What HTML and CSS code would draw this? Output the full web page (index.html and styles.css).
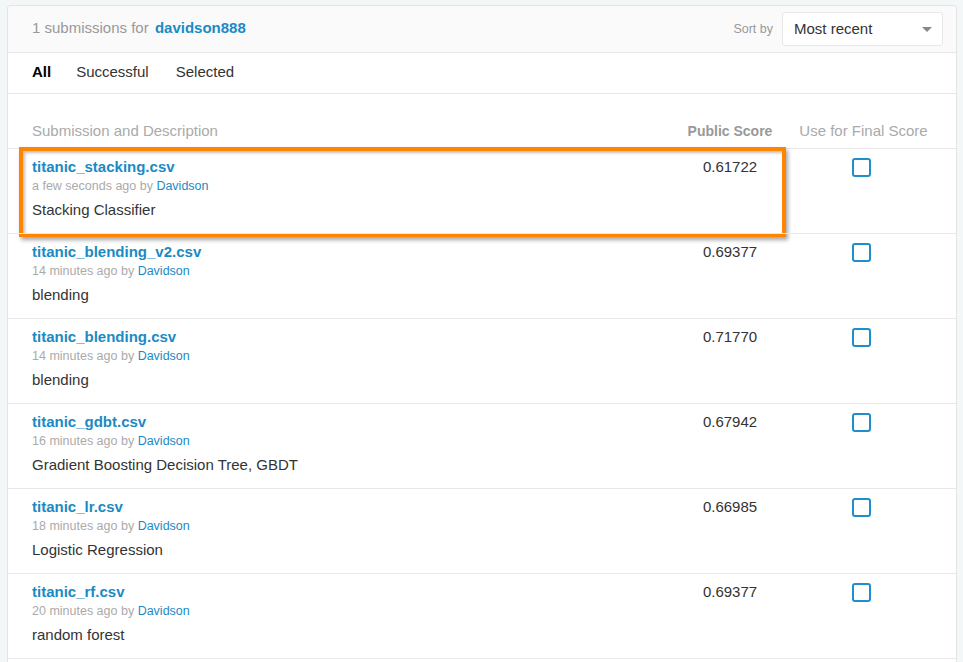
FILE: index.html
```html
<!DOCTYPE html>
<html lang="en">
<head>
<meta charset="utf-8">
<title>Submissions</title>
<link rel="stylesheet" href="styles.css">
</head>
<body>
<div class="card">
  <div class="card-header">
    <div class="title"><span class="muted">1 submissions for</span> <a class="user">davidson888</a></div>
    <div class="sort">
      <span class="sort-label">Sort by</span>
      <div class="select"><span>Most recent</span><span class="caret"></span></div>
    </div>
  </div>
  <div class="tabs">
    <span class="tab active">All</span>
    <span class="tab">Successful</span>
    <span class="tab">Selected</span>
  </div>
  <div class="table">
    <div class="row head">
      <div class="c-desc">Submission and Description</div>
      <div class="c-score strong">Public Score</div>
      <div class="c-final">Use for Final Score</div>
    </div>
    <div class="row item">
      <div class="c-desc">
        <div class="name">titanic_stacking.csv</div>
        <div class="meta">a few seconds ago by <a class="by">Davidson</a></div>
        <div class="desc">Stacking Classifier</div>
      </div>
      <div class="c-score score">0.61722</div>
      <div class="c-final"><span class="check"></span></div>
      <div class="highlight"></div>
    </div>
    <div class="row item">
      <div class="c-desc">
        <div class="name">titanic_blending_v2.csv</div>
        <div class="meta">14 minutes ago by <a class="by">Davidson</a></div>
        <div class="desc">blending</div>
      </div>
      <div class="c-score score">0.69377</div>
      <div class="c-final"><span class="check"></span></div>
    </div>
    <div class="row item">
      <div class="c-desc">
        <div class="name">titanic_blending.csv</div>
        <div class="meta">14 minutes ago by <a class="by">Davidson</a></div>
        <div class="desc">blending</div>
      </div>
      <div class="c-score score">0.71770</div>
      <div class="c-final"><span class="check"></span></div>
    </div>
    <div class="row item">
      <div class="c-desc">
        <div class="name">titanic_gdbt.csv</div>
        <div class="meta">16 minutes ago by <a class="by">Davidson</a></div>
        <div class="desc">Gradient Boosting Decision Tree, GBDT</div>
      </div>
      <div class="c-score score">0.67942</div>
      <div class="c-final"><span class="check"></span></div>
    </div>
    <div class="row item">
      <div class="c-desc">
        <div class="name">titanic_lr.csv</div>
        <div class="meta">18 minutes ago by <a class="by">Davidson</a></div>
        <div class="desc">Logistic Regression</div>
      </div>
      <div class="c-score score">0.66985</div>
      <div class="c-final"><span class="check"></span></div>
    </div>
    <div class="row item last">
      <div class="c-desc">
        <div class="name">titanic_rf.csv</div>
        <div class="meta">20 minutes ago by <a class="by">Davidson</a></div>
        <div class="desc">random forest</div>
      </div>
      <div class="c-score score">0.69377</div>
      <div class="c-final"><span class="check"></span></div>
    </div>
  </div>
</div>
</body>
</html>
```

FILE: styles.css
```css
html, body {
  background: #f4f7f8;
}
body {
  margin: 5px 6px 0 7px;
  font-family: "Liberation Sans", Arial, sans-serif;
  color: #333;
}
.card {
  background: #fff;
  border: 1px solid #e2e4e5;
  border-bottom: none;
  border-radius: 4px 4px 0 0;
  min-height: 700px;
}
.card-header {
  height: 46px;
  background: #fafafa;
  border-bottom: 1px solid #e6e6e6;
  border-radius: 4px 4px 0 0;
  display: flex;
  align-items: center;
  justify-content: space-between;
  padding: 0 13px 0 24px;
}
.title {
  font-size: 15px;
  margin-bottom: 3px;
}
.muted {
  color: #999;
}
.user {
  color: #1b8ac4;
  font-weight: bold;
  margin-left: 2px;
}
.sort {
  display: flex;
  align-items: center;
}
.sort-label {
  font-size: 12.5px;
  color: #999;
  margin-right: 9px;
}
.select {
  box-sizing: border-box;
  width: 161px;
  height: 34px;
  border: 1px solid #e8e8e8;
  border-radius: 3px;
  background: #fff;
  display: flex;
  align-items: center;
  justify-content: space-between;
  padding: 0 10px 2px 11px;
  font-size: 15px;
  color: #333;
}
.caret {
  width: 0;
  height: 0;
  margin-top: 2px;
  border-left: 5px solid transparent;
  border-right: 5px solid transparent;
  border-top: 5px solid #888;
}
.tabs {
  box-sizing: border-box;
  height: 41px;
  border-bottom: 1px solid #e6e6e6;
  display: flex;
  align-items: center;
  padding: 0 0 4px 24px;
  font-size: 15px;
}
.tab {
  color: #333;
  margin-right: 27px;
}
.tab.active {
  color: #000;
  font-weight: bold;
  margin-right: 25px;
}
.table {
  display: flex;
  flex-direction: column;
}
.row {
  display: grid;
  grid-template-columns: 1fr 120px 141px;
  column-gap: 3px;
  padding: 0 22px 0 24px;
}
.row.head {
  padding-top: 28px;
  padding-bottom: 8px;
  font-size: 15px;
  line-height: 18px;
  color: #aaa;
}
.c-score, .c-final {
  text-align: center;
}
.strong {
  font-weight: bold;
  font-size: 14px;
  color: #999;
}
.row.item {
  position: relative;
  box-sizing: border-box;
  height: 85px;
  border-top: 1px solid #e8e8e8;
  padding-top: 9px;
}
.row.item.last {
  border-bottom: 1px solid #e8e8e8;
  height: 86px;
}
.name {
  font-size: 15px;
  line-height: 18px;
  font-weight: bold;
  color: #1b8ac4;
}
.meta {
  margin-top: 2px;
  font-size: 12.5px;
  line-height: 16px;
  color: #aaa;
}
.by {
  color: #1b8ac4;
}
.desc {
  margin-top: 6px;
  font-size: 15px;
  line-height: 20px;
  color: #333;
}
.score {
  font-size: 15px;
  line-height: 18px;
  color: #333;
}
.c-final {
  padding-top: 0;
}
.check {
  display: inline-block;
  box-sizing: border-box;
  width: 19px;
  height: 19px;
  margin-right: 4px;
  border: 2px solid #1f8ecb;
  border-radius: 3px;
  background: #fff;
}
.highlight {
  position: absolute;
  top: -2px;
  left: 11px;
  box-sizing: border-box;
  width: 767px;
  height: 90px;
  border: 4px solid #ff8400;
  box-shadow: 2px 3px 4px rgba(0, 0, 0, 0.35), inset 2px 2px 3px rgba(0, 0, 0, 0.25);
  pointer-events: none;
}
```
